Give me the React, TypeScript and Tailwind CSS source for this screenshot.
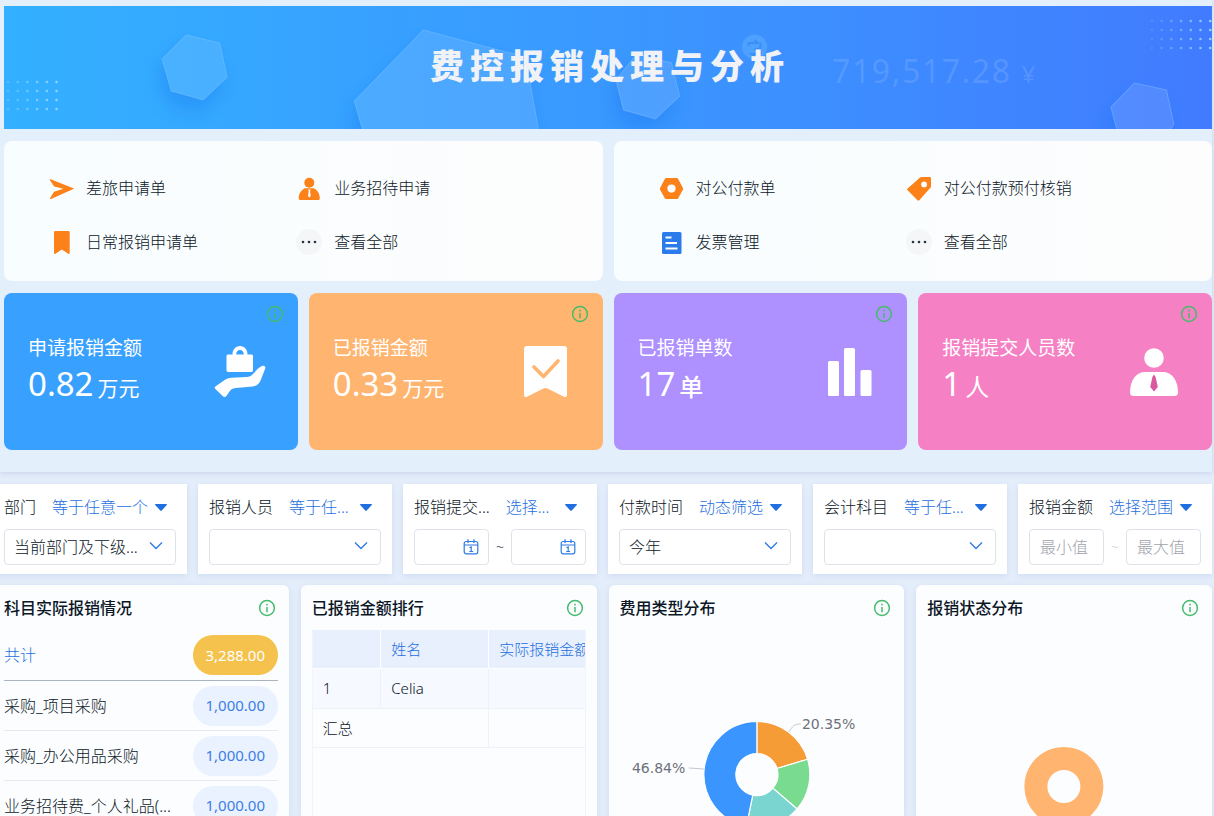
import { ReactNode } from 'react';

interface QuickLink {
  label: string;
  icon: ReactNode;
}

interface StatCardProps {
  label: string;
  value: string;
  unit: string;
  unitClass: string;
  color: string;
  icon: ReactNode;
}

interface Slice {
  from: number;
  to: number;
  color: string;
}

const OVERVIEW_ROWS = [
  { name: '采购_项目采购', amount: '1,000.00' },
  { name: '采购_办公用品采购', amount: '1,000.00' },
  { name: '业务招待费_个人礼品(...', amount: '1,000.00' },
];

const TYPE_SLICES: Slice[] = [
  { from: 0, to: 73.3, color: '#f59c36' },
  { from: 73.3, to: 130.6, color: '#78db90' },
  { from: 130.6, to: 191.4, color: '#7ad5d0' },
  { from: 191.4, to: 360, color: '#3a95ff' },
];

function MoreIcon() {
  return (
    <svg className="w-[26px] h-[26px]" viewBox="0 0 26 26">
      <circle cx="13" cy="13" r="13" fill="#f5f6f8" />
      <g fill="#2a3340">
        <circle cx="7" cy="13" r="1.3" />
        <circle cx="13" cy="13" r="1.3" />
        <circle cx="19" cy="13" r="1.3" />
      </g>
    </svg>
  );
}

const APPLY_LINKS: QuickLink[] = [
  {
    label: '差旅申请单',
    icon: (
      <svg className="w-[26px] h-[26px]" viewBox="0 0 26 26" fill="#fb8118">
        <path d="M2.6 4.2 25.4 13.2c.5.2.5.7 0 .9L3 23.9c-.8.3-1.3-.3-.9-1L6 16.8l9.5-3.1L6.2 11.6 1.8 5.1c-.3-.6.2-1.1.8-.9Z" />
      </svg>
    ),
  },
  {
    label: '业务招待申请',
    icon: (
      <svg className="w-[26px] h-[26px]" viewBox="0 0 26 26" fill="#fb8118">
        <circle cx="13.3" cy="7.7" r="5" />
        <path d="M8.8 13.2h9c3.6 1.8 6 5.5 6 10.1 0 1-.5 1.6-1.5 1.6H4.2c-1 0-1.5-.6-1.5-1.6 0-4.6 2.5-8.3 6.1-10.1Z" />
        <path d="M12.2 14.5h2.4l-.5 1.7.7 4.7-1.4 1.5-1.4-1.5.7-4.7Z" fill="#fff" />
      </svg>
    ),
  },
  {
    label: '日常报销申请单',
    icon: (
      <svg className="w-[26px] h-[26px]" viewBox="0 0 26 26" fill="#fb8118">
        <path d="M7.5 2h12.7c1 0 1.5.5 1.5 1.5v20.6c0 .9-.7 1.2-1.4.7L13.8 20.5l-6.4 4.3c-.7.5-1.4.2-1.4-.7V3.5C6 2.5 6.500 2 7.500 2Z" />
      </svg>
    ),
  },
  { label: '查看全部', icon: <MoreIcon /> },
];

const PAYMENT_LINKS: QuickLink[] = [
  {
    label: '对公付款单',
    icon: (
      <svg className="w-[26px] h-[26px]" viewBox="0 0 26 26">
        <path
          fill="#fb8118"
          fillRule="evenodd"
          d="M8.3 3h10.4c.7 0 1.2.3 1.5.9l4.7 9c.3.6.3 1.2 0 1.8l-4.7 8.5c-.3.6-.8.9-1.5.9H8.3c-.7 0-1.2-.3-1.5-.9l-4.7-8.500c-.3-.6-.3-1.2 0-1.8l4.7-9c.3-.6.8-.9 1.5-.9Zm5.2 6.5a4.1 4.1 0 1 0 0 8.2 4.1 4.1 0 0 0 0-8.200Z"
        />
      </svg>
    ),
  },
  {
    label: '对公付款预付核销',
    icon: (
      <svg className="w-[26px] h-[26px]" viewBox="0 0 26 26">
        <path
          fill="#fb8118"
          fillRule="evenodd"
          d="M15.5 2h8.3c.8 0 1.2.4 1.2 1.2v8c0 .8-.2 1.3-.8 1.8L13.3 25.2c-.6.6-1.2.6-1.8 0L1.6 15.3c-.6-.6-.6-1.2 0-1.8L13.8 2.7c.5-.5 1-.7 1.7-.7Zm2.6 4.5a2.9 2.9 0 1 0 0 5.8 2.9 2.9 0 0 0 0-5.8Z"
        />
      </svg>
    ),
  },
  {
    label: '发票管理',
    icon: (
      <svg className="w-[26px] h-[26px]" viewBox="0 0 26 26">
        <rect x="4" y="3" width="19.5" height="22" rx="1.5" fill="#2b7bea" />
        <path d="M7.5 8.5h6M7.5 14h11.5M7.5 19.5h12" stroke="#fff" strokeWidth="2" />
      </svg>
    ),
  },
  { label: '查看全部', icon: <MoreIcon /> },
];

const STATS: StatCardProps[] = [
  {
    label: '申请报销金额',
    value: '0.82',
    unit: '万元',
    unitClass: 'text-[21px]',
    color: 'bg-[#38a0ff]',
    icon: (
      <svg className="w-[52px] h-[52px]" viewBox="0 0 52 52" fill="#fff">
        <path
          fillRule="evenodd"
          d="M18.5 8.5C18.5 3.5 21.7 0 26 0s7.5 3.5 7.5 8.5h3.7c1.2 0 1.8.6 1.8 1.8v14c0 1.2-.6 1.7-1.8 1.7H14.3c-1.2 0-1.8-.5-1.8-1.7v-14c0-1.2.6-1.8 1.8-1.8Zm3.7 0h7.6c0-2.7-1.5-4.6-3.8-4.6s-3.8 1.9-3.8 4.6Z"
        />
        <path d="M1.7 40.2 11 33.8c2.2-1.4 4.2-2 6.7-2.1l14.8-.7c2.9-.2 4.7-.8 6.5-3 2.8-3.3 5.6-6.4 9-8 2.1-.9 4 .4 3.2 2.6l-4.4 11.4c-1.4 3.7-3.9 6-8 6.4l-17.3 1.7c-2.8.3-4.6 1.4-6.2 3.6l-2.7 4c-1.2 1.7-2.6 1.8-4 .2l-7.2-7c-1-1-.9-1.900.3-2.700Z" />
      </svg>
    ),
  },
  {
    label: '已报销金额',
    value: '0.33',
    unit: '万元',
    unitClass: 'text-[21px]',
    color: 'bg-[#ffb470]',
    icon: (
      <svg className="w-[52px] h-[52px]" viewBox="0 0 52 52">
        <path
          fill="#fff"
          d="M8 0h37c2 0 3 1 3 3v45.5c0 2.4-1.4 3.2-3.5 2L28.5 42.5c-1.3-.7-2.7-.7-4 0L8.5 50.5C6.4 51.7 5 50.9 5 48.5V3c0-2 1-3 3-3Z"
        />
        <path
          d="m15 21 9.5 9.5 14.5-15.5"
          fill="none"
          stroke="#ffb470"
          strokeWidth="3.6"
          strokeLinecap="round"
          strokeLinejoin="round"
        />
      </svg>
    ),
  },
  {
    label: '已报销单数',
    value: '17',
    unit: '单',
    unitClass: 'text-2xl font-medium',
    color: 'bg-[#ae90ff]',
    icon: (
      <svg className="w-[52px] h-[52px]" viewBox="0 0 52 52" fill="#fff">
        <rect x="5" y="15" width="11" height="35" rx="1.5" />
        <rect x="21" y="2" width="11" height="48" rx="1.5" />
        <rect x="37.5" y="24" width="11" height="26" rx="1.5" />
      </svg>
    ),
  },
  {
    label: '报销提交人员数',
    value: '1',
    unit: '人',
    unitClass: 'text-2xl',
    color: 'bg-[#f680c4]',
    icon: (
      <svg className="w-[52px] h-[52px]" viewBox="0 0 52 52">
        <circle cx="26" cy="12" r="9.8" fill="#fff" />
        <path
          fill="#fff"
          d="M17 26h18c8.5 0 15 8 15 20.5 0 2.3-1.2 3.5-3.5 3.5h-41C3.2 50 2 48.8 2 46.5 2 34 8.5 26 17 26Z"
        />
        <path d="m26 28.5 1.6 2.5 2.2 10L26 45.5 22.2 41l2.2-10Z" fill="#d9589f" />
      </svg>
    ),
  },
];

function InfoButton({ className = '' }: { className?: string }) {
  return (
    <button type="button" aria-label="info" className={`cursor-pointer shrink-0 ${className}`}>
      <svg className="w-[18px] h-[18px]" viewBox="0 0 18 18" fill="none" stroke="#46bb6b" strokeWidth="1.5">
        <circle cx="9" cy="9" r="7.4" />
        <path d="M9 7.9v5.3M9 4.8v1.6" />
      </svg>
    </button>
  );
}

function Banner() {
  const shapes = [
    '186,35 219.5,43 227,77 203,100 171,91 162,59',
    '423,30 525,57 538,129 545,165 380,165 362,129 354,101',
    '636,54 671,63 679,96 655,119 623,110 615.5,80',
    '1133.5,83 1165.5,90 1173,124 1160,145 1120,145 1110,107',
  ];

  return (
    <header className="relative h-[123px] overflow-hidden bg-linear-to-r from-[#33b0ff] via-[#3a98ff] to-[#417bff]">
      <svg
        className="absolute inset-0 w-full h-full"
        viewBox="4 6 1207 123"
        preserveAspectRatio="xMidYMid slice"
      >
        <defs>
          <filter id="soft" x="-50%" y="-50%" width="200%" height="200%">
            <feGaussianBlur stdDeviation="9" />
          </filter>
          <linearGradient id="sky" gradientUnits="userSpaceOnUse" x1="4" y1="0" x2="1211" y2="0">
            <stop offset="0" stopColor="#33b0ff" />
            <stop offset="0.5" stopColor="#3a98ff" />
            <stop offset="1" stopColor="#417bff" />
          </linearGradient>
        </defs>
        {shapes.map((points) => (
          <g key={points}>
            <polygon points={points} fill="#1478f0" opacity="0.4" filter="url(#soft)" transform="translate(-4 12)" />
            <polygon points={points} fill="url(#sky)" />
            <polygon points={points} fill="#fff" fillOpacity="0.1" stroke="#8cc8ff" strokeOpacity="0.4" />
          </g>
        ))}
        {/* Dot grids in the corners */}
        {[0, 1, 2, 3].map((row) => (
          <g key={row} fill="#a5dcff">
            {[0, 1, 2, 3, 4, 5].map((col) => (
              <circle key={col} cx={8 + col * 9.7} cy={82 + row * 9} r="1.3" opacity={0.3 + col * 0.11} />
            ))}
            {[0, 1, 2, 3, 4, 5, 6].map((col) => (
              <circle key={col} cx={1151 + col * 9.7} cy={21 + row * 9} r="1.3" opacity={0.15 + col * 0.12} />
            ))}
          </g>
        ))}
        <circle cx="754" cy="47" r="12.5" fill="#5fb0ff" opacity="0.5" />
        <path
          d="M748 46v-3h9l-3-3M760 43v3c0 2-1 3-3 3h-3M760 50c0 2-1 4-3 4h-6l3 3"
          fill="none"
          stroke="#3a8ff8"
          strokeWidth="2"
        />
      </svg>
      <div className="relative h-full flex items-center justify-center pl-1 pb-0.5">
        <h1 className="text-[34px] font-black tracking-[6px] text-[#f0f2f6]">费控报销处理与分析</h1>
        <p className="absolute left-[828px] top-[41px] text-[32px] leading-12 font-normal tracking-wider text-white/12">
          719,517.28 <span className="text-2xl">¥</span>
        </p>
      </div>
    </header>
  );
}

function QuickLinks({ links }: { links: QuickLink[] }) {
  return (
    <nav className="grid grid-cols-2 rounded-lg pl-11 pr-[58px] pt-5 pb-3 bg-linear-to-r from-[#f8fdff] to-[#fdfdfd]">
      {links.map((link) => (
        <button key={link.label} type="button" className="h-[54px] flex items-center gap-3 cursor-pointer">
          {link.icon}
          <span className="whitespace-nowrap">{link.label}</span>
        </button>
      ))}
    </nav>
  );
}

function StatCard({ label, value, unit, unitClass, color, icon }: StatCardProps) {
  return (
    <section className={`relative min-h-[157px] rounded-lg pl-6 pr-8 flex items-center justify-between font-normal text-white ${color}`}>
      <div className="pt-0.5">
        <h2 className="text-[19px] leading-7">{label}</h2>
        <p className="leading-11 whitespace-nowrap">
          <span className="text-[33px]">{value}</span>
          <span className={`ml-1 ${unitClass}`}>{unit}</span>
        </p>
      </div>
      {icon}
      <InfoButton className="absolute right-3.5 top-3" />
    </section>
  );
}

function FilterCard({ label, operator, children }: { label: string; operator: string; children: ReactNode }) {
  return (
    <div className="bg-white px-[11px] py-[9px] shadow-[0_2px_6px_rgba(60,110,190,0.12)]">
      <div className="h-7 mb-2 flex items-center gap-4 pr-[9px]">
        <span className="shrink-0">{label}</span>
        <button type="button" className="flex-1 flex items-center justify-between text-[#1f6fe0] cursor-pointer">
          <span className="whitespace-nowrap">{operator}</span>
          <svg className="w-3 h-[7px] shrink-0" viewBox="0 0 12 7" fill="currentColor">
            <path d="M.8 0h10.4c.8 0 1 .6.6 1.1L6.7 6.5c-.4.5-1 .5-1.4 0L.2 1.1C-.2.6 0 0 .8 0Z" />
          </svg>
        </button>
      </div>
      {children}
    </div>
  );
}

function SelectField({ label, value }: { label: string; value: string }) {
  return (
    <div className="relative">
      <select
        aria-label={label}
        className="w-full h-9 pl-[9px] pr-8 appearance-none rounded border border-[#dfe2e8] bg-white"
      >
        <option>{value}</option>
      </select>
      <svg
        className="absolute right-[13px] top-3 w-[14px] h-[10px] pointer-events-none"
        viewBox="0 0 14 10"
        fill="none"
        stroke="#2f7ae5"
        strokeWidth="1.4"
      >
        <path d="m1 1.500 6 6 6-6" />
      </svg>
    </div>
  );
}

function DateField({ label }: { label: string }) {
  return (
    <div className="relative flex-1">
      <input type="text" aria-label={label} className="w-full h-9 pl-2 pr-8 rounded border border-[#dfe2e8]" />
      <svg
        className="absolute right-2.5 top-2.5 w-4 h-4 pointer-events-none"
        viewBox="0 0 16 16"
        fill="none"
        stroke="#2f7ae5"
        strokeWidth="1.2"
      >
        <rect x="1.2" y="2.5" width="13.6" height="12.3" rx="2" />
        <path d="M1.2 6h13.6M5 .3v3.7M11 .3v3.7M6.500 8.800 8.200 8v4.500M6.300 12.500h3.800" />
      </svg>
    </div>
  );
}

function Panel({ title, children }: { title: string; children: ReactNode }) {
  return (
    <section className="min-w-0 px-[11px] overflow-hidden rounded-t-md bg-[#fcfdff] shadow-[0_2px_6px_rgba(60,110,190,0.12)]">
      <div className="h-[45px] flex items-center justify-between pr-0.5">
        <h2 className="font-medium">{title}</h2>
        <InfoButton />
      </div>
      {children}
    </section>
  );
}

function slicePath({ from, to }: Slice, cx: number, cy: number, outer: number, inner: number) {
  const point = (deg: number, r: number) => {
    const rad = (deg * Math.PI) / 180;
    return `${cx + r * Math.sin(rad)} ${cy - r * Math.cos(rad)}`;
  };
  const large = to - from > 180 ? 1 : 0;
  return `M${point(from, outer)}A${outer} ${outer} 0 ${large} 1 ${point(to, outer)}L${point(to, inner)}A${inner} ${inner} 0 ${large} 0 ${point(from, inner)}Z`;
}

export default function App() {
  return (
    <div className="h-screen overflow-hidden flex flex-col bg-[#e4edfa] text-base font-light text-[#0b1626] font-['Noto_Sans','Noto_Sans_CJK_SC',sans-serif]">
      <div className="relative shrink-0 mr-0.5 pl-1 pt-1.5 pb-[22px] flex flex-col gap-3 bg-[#e4effc] shadow-[0_1px_6px_rgba(60,100,160,0.18)]">
        <Banner />
        <div className="grid grid-cols-2 gap-[11px]">
          <QuickLinks links={APPLY_LINKS} />
          <QuickLinks links={PAYMENT_LINKS} />
        </div>
        <div className="grid grid-cols-4 gap-[11px]">
          {STATS.map((stat) => (
            <StatCard key={stat.label} {...stat} />
          ))}
        </div>
      </div>

      {/* The lower board runs slightly past the left edge of the window */}
      <main className="flex-1 min-h-0 -ml-[7px] mr-0.5 pt-3 flex flex-col gap-[11px]">
        <form className="shrink-0 grid grid-cols-6 gap-[11px]">
          <FilterCard label="部门" operator="等于任意一个">
            <SelectField label="部门" value="当前部门及下级..." />
          </FilterCard>
          <FilterCard label="报销人员" operator="等于任...">
            <SelectField label="报销人员" value="" />
          </FilterCard>
          <FilterCard label="报销提交..." operator="选择...">
            <div className="flex items-center gap-[7px]">
              <DateField label="开始日期" />
              <span className="text-sm">~</span>
              <DateField label="结束日期" />
            </div>
          </FilterCard>
          <FilterCard label="付款时间" operator="动态筛选">
            <SelectField label="付款时间" value="今年" />
          </FilterCard>
          <FilterCard label="会计科目" operator="等于任...">
            <SelectField label="会计科目" value="" />
          </FilterCard>
          <FilterCard label="报销金额" operator="选择范围">
            <div className="flex items-center gap-[7px]">
              <input
                type="text"
                aria-label="最小值"
                placeholder="最小值"
                className="flex-1 min-w-0 h-9 px-2.5 rounded border border-[#dfe2e8] placeholder:text-[#a0a4ac]"
              />
              <span className="text-sm text-[#c9ccd2]">~</span>
              <input
                type="text"
                aria-label="最大值"
                placeholder="最大值"
                className="flex-1 min-w-0 h-9 px-2.5 rounded border border-[#dfe2e8] placeholder:text-[#a0a4ac]"
              />
            </div>
          </FilterCard>
        </form>

        <div className="flex-1 min-h-0 grid grid-cols-4 gap-3">
          <Panel title="科目实际报销情况">
            <ul>
              <li className="h-[51px] flex items-center justify-between border-b border-[#a9b4bf] text-[#1f6fe0]">
                <span>共计</span>
                <span className="w-[85px] h-10 rounded-full flex items-center justify-center bg-[#f4c24d] text-[15px] font-normal text-white">
                  3,288.00
                </span>
              </li>
              {OVERVIEW_ROWS.map((row) => (
                <li key={row.name} className="h-[50px] flex items-center justify-between border-b border-[#e6eaf0]">
                  <span className="whitespace-nowrap">{row.name}</span>
                  <span className="w-[85px] h-10 rounded-full flex items-center justify-center bg-[#e9f2fe] text-[15px] font-normal text-[#3d7de8]">
                    {row.amount}
                  </span>
                </li>
              ))}
            </ul>
          </Panel>

          <Panel title="已报销金额排行">
            <div className="h-full overflow-hidden border-x border-[#f1f4fa]">
              <table className="w-[310px] table-fixed text-left text-[15px] leading-6">
                <colgroup>
                  <col className="w-[68px]" />
                  <col className="w-[108px]" />
                  <col />
                </colgroup>
                <thead>
                  <tr className="h-[38px] bg-[#e8effd] text-[#1f6fe0] border-b border-white">
                    <th className="px-2.5 font-light border-r border-white" />
                    <th className="px-2.5 font-light border-r border-white">姓名</th>
                    <th className="px-2.5 font-light">实际报销金额</th>
                  </tr>
                </thead>
                <tbody>
                  <tr className="h-10 bg-[#f6f9ff] border-b border-[#edf1f8]">
                    <td className="px-2.5 border-r border-[#edf1f8]">1</td>
                    <td className="px-2.5 border-r border-[#edf1f8]">Celia</td>
                    <td />
                  </tr>
                  <tr className="h-[39px] border-b border-[#edf1f8]">
                    <td colSpan={2} className="px-2.5 border-r border-[#edf1f8]">汇总</td>
                    <td />
                  </tr>
                </tbody>
              </table>
            </div>
          </Panel>

          <Panel title="费用类型分布">
            <svg className="w-full h-[220px]" viewBox="0 0 272 220">
              {TYPE_SLICES.map((slice) => (
                <path
                  key={slice.color}
                  d={slicePath(slice, 136, 144.5, 53, 21)}
                  fill={slice.color}
                  stroke="#fff"
                  strokeWidth="1.2"
                />
              ))}
              <path d="M168 102c4-6 5-8 12-8M68 138l15 1" fill="none" stroke="#c3c8d0" />
              <g className="font-['DejaVu_Sans',sans-serif] text-sm font-normal" fill="#6e7079">
                <text x="181" y="99">20.35%</text>
                <text x="11" y="143">46.84%</text>
              </g>
            </svg>
          </Panel>

          <Panel title="报销状态分布">
            <svg className="w-full h-[220px]" viewBox="0 0 272 220">
              <circle cx="136" cy="156.5" r="28" fill="none" stroke="#ffb470" strokeWidth="23" />
            </svg>
          </Panel>
        </div>
      </main>
    </div>
  );
}
